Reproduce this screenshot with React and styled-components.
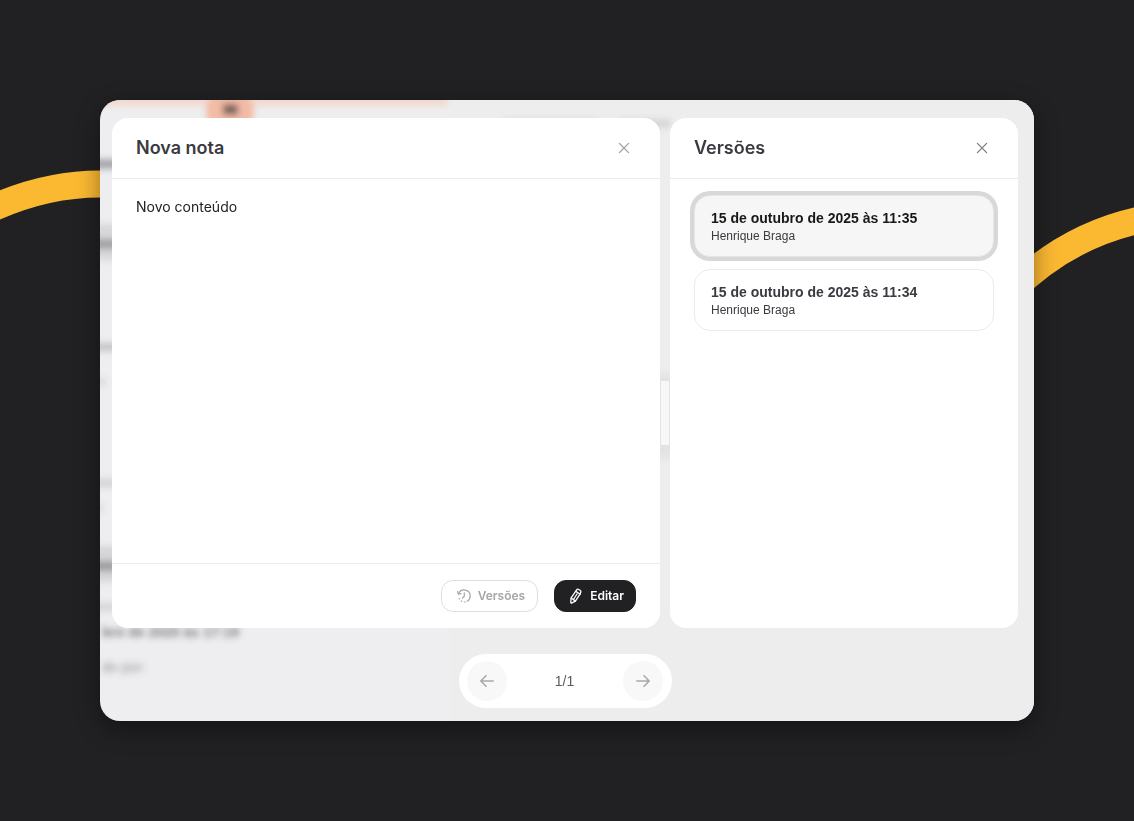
import React, { useState } from 'react';
import styled, { createGlobalStyle } from 'styled-components';

const GlobalStyle = createGlobalStyle`
  * {
    box-sizing: border-box;
  }

  body {
    margin: 0;
    background-color: #212123;
    color: #3a3a40;
    font-family: Inter, 'Liberation Sans', sans-serif;
  }

  button {
    font-family: inherit;
    cursor: pointer;
  }
`;

const Page = styled.div`
  position: relative;
  display: flex;
  min-height: 100vh;
  padding: 100px;
`;

const Ribbon = styled.svg`
  position: absolute;
  top: 0;
  left: 0;
  width: 100%;
  height: 100%;
`;

const Shadow = styled.div`
  position: relative;
  display: flex;
  flex: 1;
  border-radius: 20px;
  box-shadow: 0 8px 24px rgba(0, 0, 0, 0.4);
`;

const Window = styled.div`
  position: relative;
  display: flex;
  flex: 1;
  flex-direction: column;
  align-items: center;
  gap: 26px;
  padding: 18px 16px 13px 12px;
  overflow: hidden;
  border-radius: 20px;
  background-color: #eeeef0;
`;

const Backdrop = styled.svg`
  position: absolute;
  top: 0;
  left: 0;
  width: 100%;
  height: 100%;
`;

const Panels = styled.main`
  position: relative;
  display: flex;
  flex: 1;
  align-self: stretch;
  gap: 10px;
`;

const Panel = styled.section`
  display: flex;
  flex: ${({ $wide }) => ($wide ? '1' : '0 0 348px')};
  flex-direction: column;
  border-radius: 16px;
  background-color: #fff;
`;

const PanelHeader = styled.header`
  display: flex;
  align-items: center;
  justify-content: space-between;
  height: 61px;
  padding: 0 24px;
  border-bottom: 1px solid #ebebec;
`;

const Title = styled.h2`
  margin: 0;
  font-size: 18px;
  font-weight: 600;
  line-height: 24px;
`;

const CloseButton = styled.button`
  display: flex;
  padding: 4px;
  border: none;
  background: none;
  color: ${({ $muted }) => ($muted ? '#a3a3a6' : '#7d7d80')};
`;

const NoteBody = styled.p`
  flex: 1;
  margin: 0;
  padding: 18px 24px;
  color: #212123;
  font-size: 14px;
  line-height: 20px;
`;

const PanelFooter = styled.footer`
  display: flex;
  justify-content: flex-end;
  gap: 16px;
  padding: 16px 24px;
  border-top: 1px solid #ebebec;
`;

const ActionButton = styled.button`
  display: flex;
  align-items: center;
  gap: 6px;
  height: 32px;
  padding: ${({ $primary }) => ($primary ? '0 11px 0 13px' : '0 12px 0 14px')};
  border: 1px solid ${({ $primary }) => ($primary ? '#212123' : '#dededf')};
  border-radius: 12px;
  background-color: ${({ $primary }) => ($primary ? '#212123' : '#fff')};
  color: ${({ $primary }) => ($primary ? '#fff' : '#a6a6a8')};
  font-size: 12px;
  font-weight: 600;
  line-height: 16px;
`;

const VersionList = styled.ul`
  display: flex;
  flex-direction: column;
  gap: 12px;
  margin: 0;
  padding: 16px 24px;
  list-style: none;
`;

const VersionButton = styled.button`
  display: flex;
  flex-direction: column;
  width: 100%;
  padding: 12px 16px;
  border: 1px solid ${({ $active }) => ($active ? '#e6e6e7' : '#ebebec')};
  border-radius: 16px;
  background-color: ${({ $active }) => ($active ? '#f6f6f6' : '#fff')};
  box-shadow: ${({ $active }) => ($active ? '0 0 0 4px #d8d8da' : 'none')};
  color: #3a3a40;
  font-family: 'Liberation Sans', sans-serif;
  font-size: 12px;
  line-height: 16px;
  text-align: left;

  strong {
    color: ${({ $active }) => ($active ? '#18181a' : '#3a3a40')};
    font-size: 14px;
    line-height: 20px;
  }
`;

const Pager = styled.nav`
  position: relative;
  display: flex;
  align-items: center;
  justify-content: space-between;
  width: 213px;
  height: 54px;
  padding: 0 9px 0 8px;
  border-radius: 27px;
  background-color: #fff;
  color: #5c5c60;
  font-family: 'Liberation Sans', sans-serif;
  font-size: 14px;
`;

const PagerButton = styled.button`
  display: flex;
  align-items: center;
  justify-content: center;
  width: 40px;
  height: 40px;
  padding: 0;
  border: none;
  border-radius: 50%;
  background-color: #f8f8f8;
  color: #a9a9aa;
`;

const Icon = ({ size = 16, stroke = 1, children }) => (
  <svg
    width={size}
    height={size}
    viewBox="0 0 16 16"
    fill="none"
    stroke="currentColor"
    strokeWidth={stroke}
    strokeLinecap="round"
    strokeLinejoin="round"
    aria-hidden="true"
  >
    {children}
  </svg>
);

const CloseIcon = () => (
  <Icon stroke={1.3}>
    <path d="M3.4 3.4l9.2 9.2M12.6 3.4l-9.2 9.2" />
  </Icon>
);

const HistoryIcon = () => (
  <Icon stroke={1.2}>
    <path d="M2.6 5.8A6 6 0 0 1 14.2 8a6 6 0 0 1-3 5.2" />
    <path d="M1.6 3.6l.7 2.6 2.7-.5" />
    <path d="M8.3 4.8v3.4L6.4 10" />
    <path d="M9 14h-.6M5.6 13.3l-.4-.3M3.3 10.9l-.2-.4" />
  </Icon>
);

const PencilIcon = () => (
  <Icon stroke={1.3}>
    <path d="M8.8 1.6q.6-.8 1.5-.3l2 1.2q.9.6.5 1.5l-.8 2.2-4.6 7-3.9 1.9q-.7.2-.7-.5l.2-4.4z" />
    <path d="M7.8 3.4l4.3 2.8M3.4 10.3l4 2.8M9 6l-3.2 5" />
  </Icon>
);

const versions = [
  { id: 2, date: '15 de outubro de 2025 às 11:35', author: 'Henrique Braga' },
  { id: 1, date: '15 de outubro de 2025 às 11:34', author: 'Henrique Braga' },
];

// blurred marks along the left edge of the document behind the modal
const smudges = [
  { y: 64, height: 9, opacity: 0.5 },
  { y: 144, height: 9, opacity: 0.45 },
  { y: 142, height: 36, opacity: 0.14 },
  { y: 247, height: 8, opacity: 0.28 },
  { y: 282, height: 7, opacity: 0.13, width: 6 },
  { y: 383, height: 9, opacity: 0.16 },
  { y: 408, height: 7, opacity: 0.12, width: 3 },
  { y: 466, height: 9, opacity: 0.45 },
  { y: 464, height: 36, opacity: 0.16 },
  { y: 507, height: 9, opacity: 0.15 },
];

const DocumentBackdrop = () => (
  <Backdrop
    aria-hidden="true"
    fontFamily="'Liberation Sans', sans-serif"
    fontSize="14"
  >
    <defs>
      <filter id="soft" x="-50%" y="-50%" width="200%" height="200%">
        <feGaussianBlur stdDeviation="3" />
      </filter>
    </defs>
    <rect x="350" width="100%" height="100%" fill="#ededed" />
    <g filter="url(#soft)">
      <rect x="-20" y="-20" width="368" height="26" fill="#f2d9cf" />
      <circle cx="130" cy="11" r="24" fill="#f2bba6" />
      <rect x="123" y="4" width="15" height="11" fill="#7d635b" />
    </g>
    <g filter="url(#soft)" fill="#55555c">
      {smudges.map(({ y, height, opacity, width = 18 }) => (
        <rect
          key={y}
          x="-10"
          y={y - height / 2}
          width={width + 10}
          height={height}
          opacity={opacity}
        />
      ))}
      <text x="2" y="537" fontWeight="700" opacity="0.75">
        bro de 2025 às 17:19
      </text>
      <text x="2" y="572" opacity="0.6">
        do por:
      </text>
      <rect x="404" y="20" width="94" height="7" opacity="0.18" />
      <rect x="520" y="20" width="50" height="7" opacity="0.18" />
      <rect x="554" y="274" width="20" height="84" opacity="0.07" />
    </g>
    <rect x="561" y="281" width="8" height="64" fill="#f7f7f8" />
  </Backdrop>
);

const App = () => {
  const [selected, setSelected] = useState(2);

  return (
    <Page>
      <GlobalStyle />
      <Ribbon
        viewBox="0 0 1134 821"
        preserveAspectRatio="none"
        fill="none"
        stroke="#fbb932"
        strokeWidth="27"
        aria-hidden="true"
      >
        <path d="M-20 214Q40 184 100 184H130" />
        <path d="M1010 292Q1070 232 1150 218" />
      </Ribbon>
      <Shadow>
        <Window>
          <DocumentBackdrop />
          <Panels>
            <Panel $wide>
              <PanelHeader>
                <Title>Nova nota</Title>
                <CloseButton $muted aria-label="Fechar nota">
                  <CloseIcon />
                </CloseButton>
              </PanelHeader>
              <NoteBody>Novo conteúdo</NoteBody>
              <PanelFooter>
                <ActionButton>
                  <HistoryIcon />
                  Versões
                </ActionButton>
                <ActionButton $primary>
                  <PencilIcon />
                  Editar
                </ActionButton>
              </PanelFooter>
            </Panel>
            <Panel>
              <PanelHeader>
                <Title>Versões</Title>
                <CloseButton aria-label="Fechar versões">
                  <CloseIcon />
                </CloseButton>
              </PanelHeader>
              <VersionList>
                {versions.map(({ id, date, author }) => (
                  <li key={id}>
                    <VersionButton
                      $active={id === selected}
                      aria-pressed={id === selected}
                      onClick={() => setSelected(id)}
                    >
                      <strong>{date}</strong>
                      <span>{author}</span>
                    </VersionButton>
                  </li>
                ))}
              </VersionList>
            </Panel>
          </Panels>
          <Pager aria-label="Paginação">
            <PagerButton aria-label="Anterior">
              <Icon stroke={1.6}>
                <path d="M14.2 8H1.8M7 2.7L1.8 8 7 13.3" />
              </Icon>
            </PagerButton>
            <span>1/1</span>
            <PagerButton aria-label="Próxima">
              <Icon stroke={1.6}>
                <path d="M1.8 8h12.4M9 2.7L14.2 8 9 13.3" />
              </Icon>
            </PagerButton>
          </Pager>
        </Window>
      </Shadow>
    </Page>
  );
};

export default App;
